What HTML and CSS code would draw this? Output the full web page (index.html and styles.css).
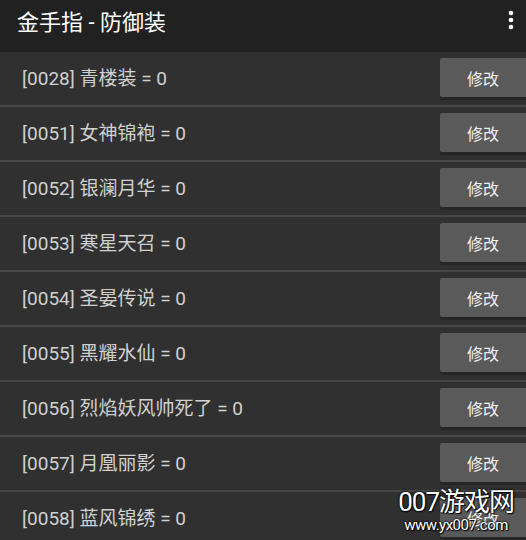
FILE: index.html
```html
<!DOCTYPE html>
<html lang="zh-CN">
<head>
    <meta charset="UTF-8">
    <meta name="viewport" content="width=device-width, initial-scale=1.0">
    <title>金手指 - 防御装</title>
    <link rel="stylesheet" href="styles.css">
</head>
<body>
    <header class="app-bar">
        <h1 class="app-title">金手指 - 防御装</h1>
        <button class="menu-btn" aria-label="更多">
            <svg width="6" height="22" viewBox="0 0 6 22">
                <circle cx="3" cy="4" r="2.3" fill="#fff"/>
                <circle cx="3" cy="11" r="2.3" fill="#fff"/>
                <circle cx="3" cy="18" r="2.3" fill="#fff"/>
            </svg>
        </button>
    </header>

    <ul class="cheat-list">
        <li class="cheat-row"><span class="cheat-label">[0028] 青楼装 = 0</span><button class="edit-btn">修改</button></li>
        <li class="cheat-row"><span class="cheat-label">[0051] 女神锦袍 = 0</span><button class="edit-btn">修改</button></li>
        <li class="cheat-row"><span class="cheat-label">[0052] 银澜月华 = 0</span><button class="edit-btn">修改</button></li>
        <li class="cheat-row"><span class="cheat-label">[0053] 寒星天召 = 0</span><button class="edit-btn">修改</button></li>
        <li class="cheat-row"><span class="cheat-label">[0054] 圣晏传说 = 0</span><button class="edit-btn">修改</button></li>
        <li class="cheat-row"><span class="cheat-label">[0055] 黑耀水仙 = 0</span><button class="edit-btn">修改</button></li>
        <li class="cheat-row"><span class="cheat-label">[0056] 烈焰妖风帅死了 = 0</span><button class="edit-btn">修改</button></li>
        <li class="cheat-row"><span class="cheat-label">[0057] 月凰丽影 = 0</span><button class="edit-btn">修改</button></li>
        <li class="cheat-row"><span class="cheat-label">[0058] 蓝风锦绣 = 0</span><button class="edit-btn">修改</button></li>
    </ul>

    <div class="watermark">
        <div class="wm-big">007游戏网</div>
        <div class="wm-small">www.yx007.com</div>
    </div>
</body>
</html>
```

FILE: styles.css
```css
:root {
    --bar-color: #212121;
    --row-color: #303030;
    --divider-color: #474747;
    --button-color: #5a5a5a;
    --text-color: #d0d0d0;
    --font-family: Roboto, "Noto Sans CJK SC", sans-serif;
}

html, body {
    margin: 0;
    padding: 0;
    height: 540px;
    overflow: hidden;
}

body {
    position: relative;
    font-family: var(--font-family);
    background-color: var(--row-color);
    color: var(--text-color);
}

.app-bar {
    height: 52px;
    background-color: var(--bar-color);
    display: flex;
    align-items: center;
    justify-content: space-between;
    padding: 0 12px 13px 17px;
    box-sizing: border-box;
}

.app-title {
    margin: 0;
    font-size: 22px;
    font-weight: 400;
    color: #fff;
}

.menu-btn {
    background: none;
    border: none;
    padding: 0;
    display: flex;
    margin-top: 1px;
}

.cheat-list {
    list-style: none;
    margin: 0;
    padding: 0;
}

.cheat-row {
    height: 53px;
    border-bottom: 2px solid var(--divider-color);
    display: flex;
    align-items: flex-start;
    justify-content: space-between;
    padding-left: 22px;
}

.cheat-label {
    font-size: 19px;
    line-height: 53px;
    white-space: nowrap;
}

.edit-btn {
    width: 86px;
    height: 39px;
    margin-top: 6px;
    border: none;
    border-radius: 2px 0 0 2px;
    background-color: var(--button-color);
    box-shadow: 0 3px 0 #262626;
    color: #f0f0f0;
    font-family: var(--font-family);
    font-size: 16px;
    padding: 0;
}

.watermark {
    position: absolute;
    right: 12px;
    bottom: 6px;
    color: #fff;
    text-align: center;
    text-shadow: 0 0 2px #000, 0 0 2px #000, 1px 1px 1px #000;
}

.wm-big {
    font-size: 26px;
    line-height: 28px;
    letter-spacing: -1px;
}

.wm-small {
    font-size: 15px;
    line-height: 18px;
    letter-spacing: -0.5px;
}
```
